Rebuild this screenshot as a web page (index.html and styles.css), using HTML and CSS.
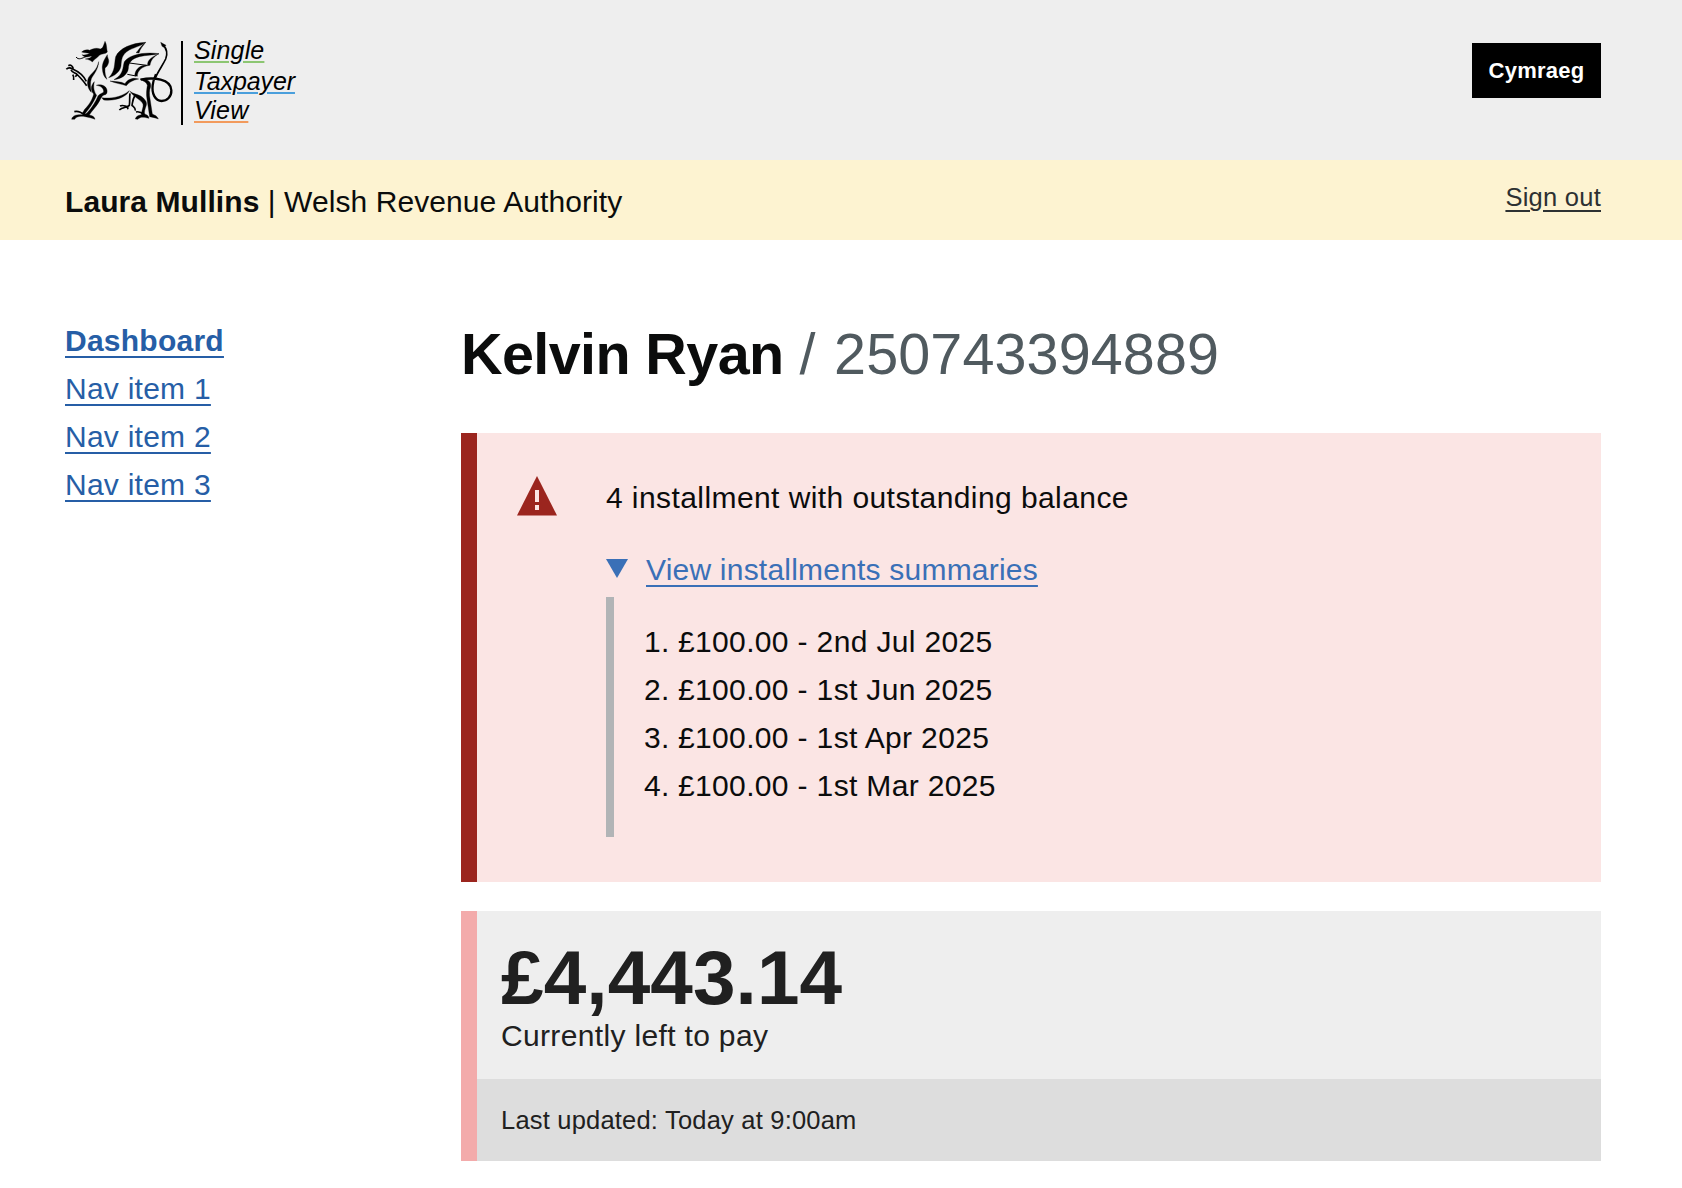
FILE: index.html
```html
<!DOCTYPE html>
<html lang="en">
<head>
<meta charset="utf-8">
<title>Single Taxpayer View</title>
<link rel="stylesheet" href="styles.css">
</head>
<body>
<header class="header">
  <a class="logo" href="#">
    <svg class="dragon" viewBox="27 24 330 255" aria-hidden="true">
      <path d="M147 34C142 48 141 55 133 57C120 52 108 57 101 61C92 58 84 60 77 66C84 69 92 68 101 70C92 75 84 76 78 74C84 82 94 82 103 79L108 79C104 84 98 86 88 87C97 88 104 91 109 96C115 87 124 84 130 76C138 70 148 73 154 66C151 54 153 44 147 34Z"/>
      <path class="hair" d="M60 81C68 91 77 85 92 79"/>
      <path d="M128 95C127 118 113 133 106 146C102 158 103 172 106 187C96 177 91 160 97 144C104 130 123 122 128 95Z"/>
      <path d="M154 74C142 92 138 104 139 116C140 130 144 142 153 148C149 138 146 130 147 114C151 112 156 106 158 97C160 88 154 84 154 74Z"/>
      <path class="line" d="M31 118C36 112 42 112 50 117C66 124 82 135 91 154M37 107C44 103 50 108 52 116M45 119C48 128 56 128 62 132C72 142 82 152 92 167M50 134C54 138 54 142 53 150M63 134L58 140"/>
      <path d="M269 37C226 39 190 55 179 80C174 102 179 122 158 143C174 139 192 126 195 108C197 90 196 73 220 60C240 50 254 49 269 37Z"/>
      <path d="M269 37C262 48 252 56 249 69L240 68C249 61 252 49 269 37Z"/>
      <path d="M309 71C264 65 220 74 205 95C199 114 204 132 174 149C198 146 214 134 217 116C218 98 225 87 250 80C270 75 290 76 309 71Z"/>
      <path d="M309 71C296 78 284 89 282 106L275 105C273 90 290 79 309 71Z"/>
      <path class="thin" d="M220 99L272 106M214 133L240 138"/>
      <path d="M280 106C258 102 238 114 236 137L244 139C244 122 258 110 280 106Z"/>
      <path d="M162 153C178 155 194 154 207 161C214 150 228 141 248 147C230 150 220 157 211 167C196 162 178 160 162 153Z"/>
      <path class="tail" d="M254 149C292 141 345 146 346 181C347 200 333 213 317 213C297 213 287 190 290 166C291 152 296 142 300 133"/>
      <path class="line" d="M298 144C306 124 320 106 329 87C336 70 330 54 321 44"/>
      <path d="M314 37L330 46L324 52L318 49Z"/>
      <path d="M252 147C270 145 287 152 284 170C279 182 280 194 282 206L289 252C297 256 304 258 307 267C298 263 290 262 281 260L273 208C270 192 272 178 274 166C272 156 262 154 252 147Z"/>
      <path d="M222 184C230 191 244 193 254 198C266 206 274 216 271 226C267 238 264 246 266 252C274 254 278 258 279 265C266 262 254 258 246 268L238 267C240 258 248 256 256 254C257 240 263 232 261 222C254 208 234 203 222 184Z"/>
      <path class="line" d="M240 246C250 243 256 247 264 254"/>
      <path d="M137 203C160 206 194 204 220 182C212 200 180 214 143 210Z"/>
      <path d="M115 155C103 167 104 182 113 192C110 208 98 226 86 238L78 251L86 253C96 240 112 220 122 196C114 184 111 172 115 155Z"/>
      <path d="M121 166C134 162 150 166 153 180C154 187 153 192 148 194C142 195 138 197 134 206C124 228 106 244 100 255C108 256 116 260 117 268C108 263 98 263 88 260C74 258 62 258 56 268L47 268C48 258 60 254 72 254C84 255 90 253 95 247C108 232 120 214 126 198C130 192 138 190 143 186C143 174 134 168 121 166Z"/>
      <path class="line" d="M55 245C66 242 76 247 86 255"/>
      <path class="line" d="M222 190C220 204 222 216 220 226C212 235 200 230 190 240M192 228C200 224 210 228 218 232M236 198C230 208 230 216 228 226C234 232 239 234 238 242M214 232L216 238"/>
    </svg>
    <span class="logo-text">
      <span class="word word-green">Single</span>
      <span class="word word-blue">Taxpayer</span>
      <span class="word word-orange">View</span>
    </span>
  </a>
  <a class="language" href="#">Cymraeg</a>
</header>
<div class="userbar">
  <p class="user"><strong>Laura Mullins</strong> | Welsh Revenue Authority</p>
  <a class="signout" href="#">Sign out</a>
</div>
<div class="layout">
  <nav class="nav">
    <a class="nav-link nav-current" href="#">Dashboard</a>
    <a class="nav-link" href="#">Nav item 1</a>
    <a class="nav-link" href="#">Nav item 2</a>
    <a class="nav-link" href="#">Nav item 3</a>
  </nav>
  <main class="main">
    <h1 class="title"><span class="title-name">Kelvin Ryan</span> <span class="reference"><span class="slash">/ </span>250743394889</span></h1>
    <section class="alert">
      <svg class="alert-icon" viewBox="0 0 40 40" aria-hidden="true">
        <path class="alert-shape" d="M20 0L40 39.5H0Z"/>
        <path class="alert-mark" d="M18 14h4v12h-4zM18 29h4v5h-4z"/>
      </svg>
      <div class="alert-body">
        <p class="alert-text">4 installment with outstanding balance</p>
        <div class="summary">
          <svg class="arrow" viewBox="0 0 22 19" aria-hidden="true"><path d="M0 0H22L11 19Z"/></svg>
          <a class="summary-link" href="#">View installments summaries</a>
        </div>
        <ol class="installments">
          <li><span class="number">1.</span>£100.00 - 2nd Jul 2025</li>
          <li><span class="number">2.</span>£100.00 - 1st Jun 2025</li>
          <li><span class="number">3.</span>£100.00 - 1st Apr 2025</li>
          <li><span class="number">4.</span>£100.00 - 1st Mar 2025</li>
        </ol>
      </div>
    </section>
    <section class="balance">
      <div class="balance-main">
        <p class="amount">£4,443.14</p>
        <p class="caption">Currently left to pay</p>
      </div>
      <p class="updated">Last updated: Today at 9:00am</p>
    </section>
  </main>
</div>
</body>
</html>
```
FILE: styles.css
```css
* { box-sizing: border-box; }

body {
  margin: 0;
  background: #fff;
  color: #0b0c0c;
  font: 30px/48px "Liberation Sans", Arial, sans-serif;
  letter-spacing: 0.25px;
}

p, h1, ol { margin: 0; padding: 0; }

.header {
  display: flex;
  justify-content: space-between;
  align-items: flex-start;
  height: 160px;
  padding: 38px 81px 0 65px;
  background: #eee;
}

.logo { display: flex; color: #000; text-decoration: none; }
.dragon { width: 110px; height: 85px; stroke: #000; stroke-width: 1; }
.dragon .hair { fill: none; stroke-width: 3; }
.dragon .thin { fill: none; stroke-width: 3; }
.dragon .line { fill: none; stroke-width: 5; }
.dragon .tail { fill: none; stroke-width: 7; }

.logo-text {
  display: flex;
  flex-direction: column;
  align-items: flex-start;
  height: 84px;
  margin: 3px 0 0 6px;
  padding-left: 11px;
  border-left: 2px solid #000;
  font-size: 25px;
  font-style: italic;
  line-height: 29px;
}

.word {
  height: 31px;
  margin-top: -5px;
  margin-bottom: 5px;
  letter-spacing: 0.15px;
  text-decoration: underline 2px;
  text-underline-offset: 2px;
}
.word-green { text-decoration-color: #8cc672; }
.word-blue {
  height: 29px;
  margin-top: -3px;
  margin-bottom: 4px;
  letter-spacing: -0.12px;
  text-decoration-color: #4a9fdc;
}
.word-orange { margin-top: -4px; text-decoration-color: #f29a5c; }

.language {
  width: 129px;
  height: 55px;
  margin-top: 5px;
  background: #000;
  color: #fff;
  font-size: 22px;
  font-weight: 700;
  line-height: 55px;
  text-align: center;
  text-decoration: none;
}

.userbar {
  display: flex;
  justify-content: space-between;
  height: 80px;
  padding: 18px 81px 0 65px;
  background: #fdf3d1;
}
.user { letter-spacing: 0.08px; }

.signout {
  color: #2d3132;
  font-size: 25.5px;
  line-height: 38px;
  text-decoration: underline 2px;
  text-underline-offset: 4px;
}

.layout {
  display: grid;
  grid-template-columns: 396px 1140px;
  padding: 77px 81px 0 65px;
}

.nav { display: flex; flex-direction: column; align-items: flex-start; }
.nav-link {
  color: #265ea6;
  text-decoration: underline 2px;
  text-underline-offset: 5px;
}
.nav-current { font-weight: 700; }

.title {
  height: 116px;
  padding-top: 3px;
  font-size: 57.5px;
  font-weight: 400;
  line-height: 68px;
  letter-spacing: 0;
  white-space: nowrap;
}
.title-name { font-weight: 700; letter-spacing: -0.6px; }
.reference { color: #505a5f; letter-spacing: 0.1px; }
.slash { letter-spacing: 1.3px; }

.alert {
  display: flex;
  height: 449px;
  padding: 41px 40px 45px;
  border-left: 16px solid #9b251e;
  background: #fbe5e4;
}
.alert-icon { width: 40px; height: 40px; margin: 2px 49px 0 0; }
.alert-shape { fill: #9b251e; }
.alert-mark { fill: #fbe5e4; }
.alert-body { flex: 1; }
.alert-text { letter-spacing: 0.42px; }

.summary { display: flex; height: 72px; padding-top: 24px; }
.arrow { width: 22px; height: 19px; margin: 13px 18px 0 0; fill: #3a70b7; }
.summary-link {
  color: #3a70b7;
  letter-spacing: 0.21px;
  text-decoration: underline 2px;
  text-underline-offset: 5px;
}

.installments {
  height: 240px;
  margin-top: 3px;
  padding: 21px 0 0 30px;
  border-left: 8px solid #b1b4b6;
  letter-spacing: 0.35px;
  list-style: none;
}
.installments li { display: flex; }
.number { width: 34px; }

.balance {
  margin-top: 29px;
  border-left: 16px solid #f3abab;
  background: #eee;
  color: #202020;
}
.balance-main { height: 168px; padding: 27px 24px 0; }
.amount { font-size: 76.5px; font-weight: 700; line-height: 80px; letter-spacing: 0.1px; }
.caption { margin-top: -2px; line-height: 40px; letter-spacing: 0.34px; }
.updated {
  height: 82px;
  padding-left: 24px;
  background: #ddd;
  font-size: 25.5px;
  line-height: 82px;
  letter-spacing: 0.2px;
}
```
